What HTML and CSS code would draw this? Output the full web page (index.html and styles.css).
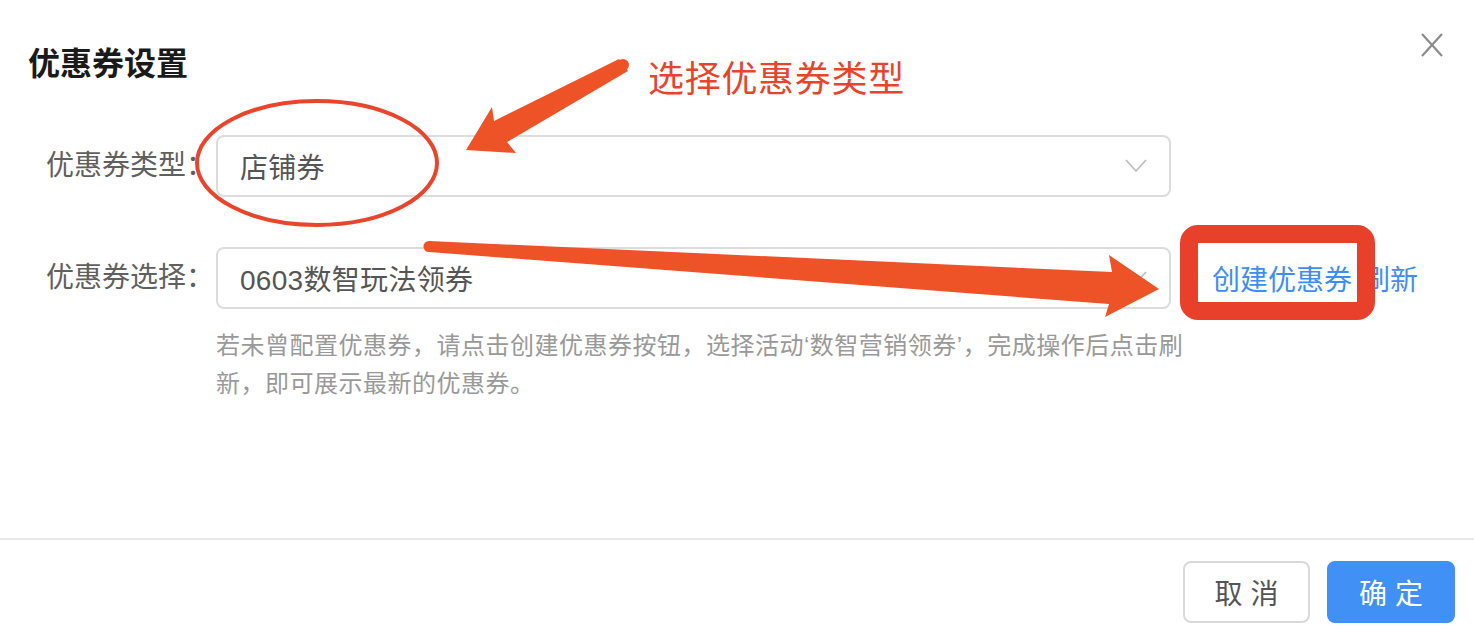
FILE: index.html
```html
<!DOCTYPE html>
<html lang="zh-CN">
<head>
    <meta charset="UTF-8">
    <meta name="viewport" content="width=device-width, initial-scale=1.0">
    <title>优惠券设置</title>
    <link rel="stylesheet" href="styles.css">
</head>
<body>
    <div class="modal">
        <div class="modal-header">
            <h2 class="modal-title">优惠券设置</h2>
            <button class="modal-close" aria-label="关闭">
                <svg width="24" height="26" viewBox="0 0 24 26">
                    <path d="M2 2 L22 24 M22 2 L2 24" stroke="#8c8c8c" stroke-width="2.2" fill="none"/>
                </svg>
            </button>
        </div>

        <div class="modal-body">
            <div class="form-row">
                <label class="form-label">优惠券类型：</label>
                <div class="form-control">
                    <div class="select">
                        <span class="select-value">店铺券</span>
                        <svg class="select-arrow" width="22" height="16" viewBox="0 0 22 16">
                            <path d="M1 2 L11 13 L21 2" stroke="#bfbfbf" stroke-width="1.8" fill="none"/>
                        </svg>
                    </div>
                </div>
            </div>

            <div class="form-row">
                <label class="form-label">优惠券选择：</label>
                <div class="form-control">
                    <div class="control-line">
                        <div class="select">
                            <span class="select-value">0603数智玩法领券</span>
                            <svg class="select-arrow" width="22" height="16" viewBox="0 0 22 16">
                                <path d="M1 2 L11 13 L21 2" stroke="#bfbfbf" stroke-width="1.8" fill="none"/>
                            </svg>
                        </div>
                        <a class="link create-link">创建优惠券</a>
                        <a class="link">刷新</a>
                    </div>
                    <p class="help-text">若未曾配置优惠券，请点击创建优惠券按钮，选择活动‘数智营销领券’，完成操作后点击刷新，即可展示最新的优惠券。</p>
                </div>
            </div>
        </div>

        <div class="modal-footer">
            <button class="btn">取 消</button>
            <button class="btn btn-primary">确 定</button>
        </div>
    </div>

    <!-- annotation marks drawn over the dialog -->
    <svg class="annotations" width="1474" height="630" viewBox="0 0 1474 630">
        <ellipse cx="317" cy="163" rx="120" ry="62" fill="none" stroke="#e8452c" stroke-width="4"/>

        <circle cx="623" cy="65" r="6" fill="#ee5227"/>
        <polygon fill="#ee5227" points="619,59 494,121 492,107 466,150 516,153 507,142 628,71"/>

        <circle cx="429" cy="246.5" r="5.5" fill="#ee5227"/>
        <polygon fill="#ee5227" points="429,241 1112,272 1109,255 1159,289 1105,317 1109,304 429,252"/>

        <rect x="1189" y="234" width="177" height="77" rx="9" fill="none" stroke="#e8402a" stroke-width="18"/>
    </svg>
    <div class="annotation-text">选择优惠券类型</div>
</body>
</html>
```

FILE: styles.css
```css
body {
    margin: 0;
    background: #fff;
    font-family: "Liberation Sans", "Noto Sans CJK SC", sans-serif;
}
.modal {
    width: 1474px;
    height: 630px;
    position: relative;
}
.modal-header {
    display: flex;
    justify-content: space-between;
    align-items: flex-start;
    padding: 41px 30px 0 28px;
}
.modal-title {
    margin: 0;
    font-size: 32px;
    line-height: 46px;
    font-weight: 700;
    color: #1a1a1a;
}
.modal-close {
    margin-top: -9px;
    padding: 0;
    border: none;
    background: none;
}
.modal-close svg {
    display: block;
}
.modal-body {
    padding: 48px 0 135px 46px;
}
.form-row {
    display: flex;
    align-items: flex-start;
}
.form-row + .form-row {
    margin-top: 50px;
}
.form-label {
    width: 170px;
    line-height: 62px;
    font-size: 28px;
    color: #606060;
    white-space: nowrap;
}
.form-control {
    display: flex;
    flex-direction: column;
}
.control-line {
    display: flex;
    align-items: center;
}
.select {
    box-sizing: border-box;
    width: 955px;
    height: 62px;
    border: 2px solid #dcdcdc;
    border-radius: 8px;
    display: flex;
    align-items: center;
    justify-content: space-between;
    padding: 0 22px 0 22px;
}
.select-value {
    font-size: 28px;
    color: #555;
    letter-spacing: 0.3px;
}
.select-arrow {
    display: block;
}
.link {
    font-size: 28px;
    color: #3d8ef0;
    margin-left: 10px;
}
.create-link {
    margin-left: 41px;
}
.help-text {
    width: 980px;
    margin: 18px 0 0;
    font-size: 24px;
    line-height: 38px;
    letter-spacing: 0.5px;
    color: #999;
}
.modal-footer {
    border-top: 2px solid #e8e8e8;
    display: flex;
    justify-content: flex-end;
    gap: 17px;
    padding: 21px 19px 0 0;
}
.btn {
    box-sizing: border-box;
    width: 127px;
    height: 62px;
    border: 2px solid #d9d9d9;
    border-radius: 8px;
    background: #fff;
    color: #555;
    font-family: "Liberation Sans", "Noto Sans CJK SC", sans-serif;
    font-size: 28px;
}
.btn-primary {
    width: 128px;
    border-color: #4090f5;
    background: #4090f5;
    color: #fff;
}
.annotations {
    position: absolute;
    top: 0;
    left: 0;
    pointer-events: none;
}
.annotation-text {
    position: absolute;
    top: 55px;
    left: 648px;
    font-size: 36px;
    line-height: 50px;
    letter-spacing: 0.7px;
    color: #e8432b;
}
```
